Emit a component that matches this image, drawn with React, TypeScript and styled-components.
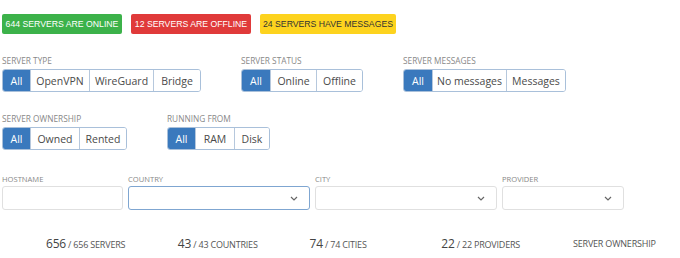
import React from "react";
import styled, { createGlobalStyle } from "styled-components";

const Global = createGlobalStyle`
  html, body { margin: 0; padding: 0; background: #fff; }
  body { font-family: "Open Sans", "Liberation Sans", sans-serif; }
`;

const Page = styled.div`
  padding: 14px 0 0 2px;
  width: 678px;
`;

const BadgeRow = styled.div`
  display: flex;
  gap: 9px;
`;

const Badge = styled.div<{ $bg: string; $fg: string; $w: number }>`
  width: ${(p) => p.$w}px;
  height: 20px;
  display: flex;
  align-items: center;
  justify-content: center;
  background: ${(p) => p.$bg};
  color: ${(p) => p.$fg};
  border-radius: 2px;
  font-family: "Liberation Sans", Arial, sans-serif;
  font-size: 8.7px;
  white-space: nowrap;
  text-transform: uppercase;
`;

const FilterRow = styled.div<{ $top: number }>`
  display: flex;
  gap: 40px;
  margin-top: ${(p) => p.$top}px;
`;

const Field = styled.div`
  display: flex;
  flex-direction: column;
`;

const Label = styled.div`
  font-size: 8.3px;
  color: #888;
  text-transform: uppercase;
  line-height: 10px;
  height: 10px;
  margin-bottom: 3px;
  white-space: nowrap;
`;

const Group = styled.div`
  display: flex;
  border: 1px solid #a9c0da;
  border-radius: 3px;
  overflow: hidden;
  height: 23px;
  box-sizing: border-box;
`;

const Btn = styled.div<{ $active?: boolean; $w: number }>`
  width: ${(p) => p.$w}px;
  box-sizing: border-box;
  display: flex;
  align-items: center;
  justify-content: center;
  font-size: 10.5px;
  color: ${(p) => (p.$active ? "#fff" : "#4a4a4a")};
  background: ${(p) => (p.$active ? "#3a79bd" : "#fff")};
  & + & {
    border-left: 1px solid #b6c8dd;
  }
`;

const InputRow = styled.div`
  display: flex;
  gap: 5px;
  margin-top: 24px;
`;

const InputLabel = styled(Label)`
  font-size: 7.6px;
  margin-bottom: 2px;
`;

const Box = styled.div<{ $w: number; $focus?: boolean }>`
  width: ${(p) => p.$w}px;
  height: 24px;
  box-sizing: border-box;
  border: 1px solid ${(p) => (p.$focus ? "#7fa6d1" : "#e0e0e0")};
  border-radius: 3px;
  display: flex;
  align-items: center;
  justify-content: flex-end;
  padding-right: 11px;
`;

const Stats = styled.div`
  display: grid;
  grid-template-columns: repeat(5, 131.75px);
  padding-left: 44px;
  margin-top: 27px;
  color: #555;
`;

const Stat = styled.div`
  font-size: 9px;
  text-transform: uppercase;
  white-space: nowrap;
  line-height: 14px;
  letter-spacing: -0.2px;
`;

const Num = styled.span`
  font-size: 12px;
  color: #444;
`;

const Chevron = () => (
  <svg width="8" height="5" viewBox="0 0 8 5">
    <path d="M1 1l3 3 3-3" fill="none" stroke="#666" strokeWidth="1.2" />
  </svg>
);

type Opt = [string, number];

const ButtonGroup = ({ label, opts }: { label: string; opts: Opt[] }) => (
  <Field>
    <Label>{label}</Label>
    <Group>
      {opts.map(([t, w], i) => (
        <Btn key={t} $w={w} $active={i === 0}>
          {t}
        </Btn>
      ))}
    </Group>
  </Field>
);

export default function App() {
  return (
    <Page>
      <Global />
      <BadgeRow>
        <Badge $bg="#3cb24a" $fg="#fff" $w={120}>644 servers are online</Badge>
        <Badge $bg="#e03a3a" $fg="#fff" $w={120}>12 servers are offline</Badge>
        <Badge $bg="#fdd31e" $fg="#333" $w={136}>24 servers have messages</Badge>
      </BadgeRow>
      <FilterRow $top={22}>
        <ButtonGroup
          label="Server type"
          opts={[["All", 27], ["OpenVPN", 59], ["WireGuard", 64], ["Bridge", 47]]}
        />
        <ButtonGroup
          label="Server status"
          opts={[["All", 28], ["Online", 46], ["Offline", 46]]}
        />
        <ButtonGroup
          label="Server messages"
          opts={[["All", 28], ["No messages", 74], ["Messages", 59]]}
        />
      </FilterRow>
      <FilterRow $top={22}>
        <ButtonGroup
          label="Server ownership"
          opts={[["All", 27], ["Owned", 49], ["Rented", 47]]}
        />
        <ButtonGroup
          label="Running from"
          opts={[["All", 27], ["RAM", 39], ["Disk", 35]]}
        />
      </FilterRow>
      <InputRow>
        <Field>
          <InputLabel>Hostname</InputLabel>
          <Box $w={121} />
        </Field>
        <Field>
          <InputLabel>Country</InputLabel>
          <Box $w={182} $focus>
            <Chevron />
          </Box>
        </Field>
        <Field>
          <InputLabel>City</InputLabel>
          <Box $w={182}>
            <Chevron />
          </Box>
        </Field>
        <Field>
          <InputLabel>Provider</InputLabel>
          <Box $w={122}>
            <Chevron />
          </Box>
        </Field>
      </InputRow>
      <Stats>
        <Stat><Num>656</Num> / 656 servers</Stat>
        <Stat><Num>43</Num> / 43 countries</Stat>
        <Stat><Num>74</Num> / 74 cities</Stat>
        <Stat><Num>22</Num> / 22 providers</Stat>
        <Stat>Server ownership</Stat>
      </Stats>
    </Page>
  );
}
